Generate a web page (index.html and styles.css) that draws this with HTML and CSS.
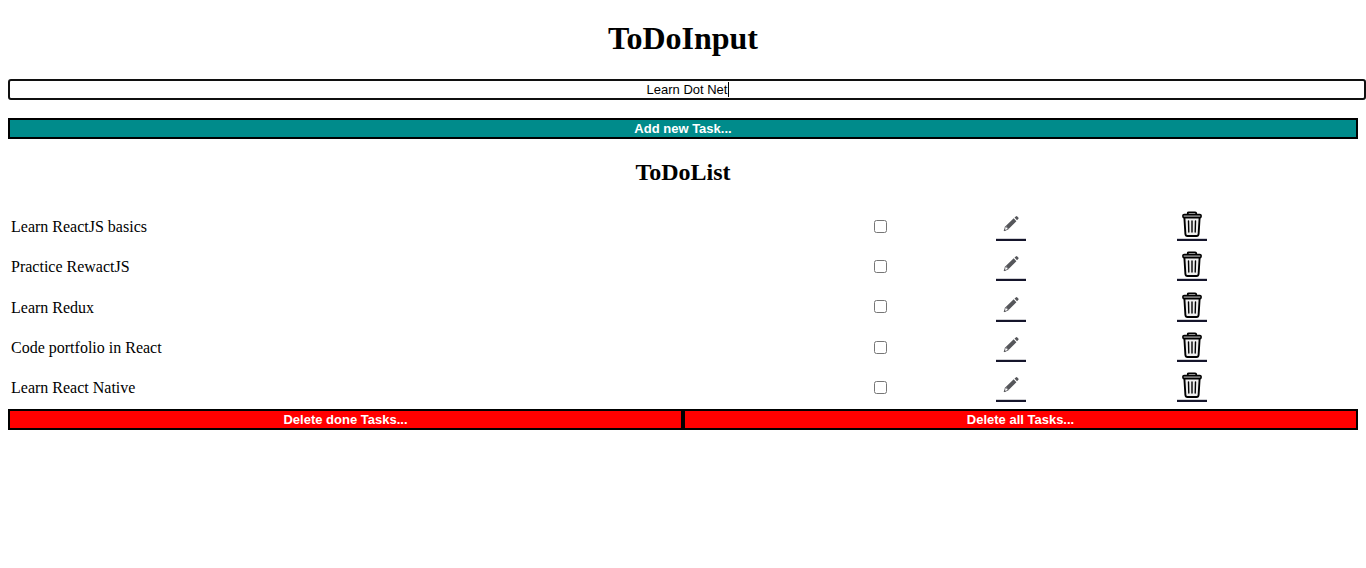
FILE: index.html
```html
<!DOCTYPE html>
<html lang="en">
<head>
<meta charset="utf-8">
<title>ToDo</title>
<link rel="stylesheet" href="styles.css">
</head>
<body>
<svg class="sprite" aria-hidden="true">
  <symbol id="pencil" viewBox="0 0 30 30">
    <path fill="#55565a" d="M18.500 6.500 19.800 5.400q.8-.6 1.500.1l1 1.100q.6.800-.1 1.500L21 9.300zM17.700 7.300l2.700 2.900-7.800 7.700-2.900-3z"/>
    <path fill="#fff" stroke="#55565a" stroke-width=".8" stroke-linejoin="round" d="M9.500 15.200 8.200 19.700l4.200-1.600z"/>
    <path fill="#55565a" d="m8.500 17.900-.7 2.200 2.200-.7z"/>
    <path fill="#15152b" d="M0 27.800h30v2.200H0z"/>
  </symbol>
  <symbol id="trash" viewBox="0 0 30 30">
    <path fill="none" stroke="#000" stroke-width="1.800" stroke-linejoin="round" d="M10.800 3.300V2.200q0-.9 1-.9h6.400q1 0 1 .9v1.100"/>
    <path fill="#eee" stroke="#000" stroke-width="1.900" stroke-linejoin="round" d="M7.400 7l1 16q.2 2 2 2h9.200q1.800 0 2-2l1-16"/>
    <rect x="5.900" y="3.400" width="18.200" height="3.400" rx="1.200" fill="#777" stroke="#000" stroke-width="1.500"/>
    <path fill="none" stroke="#000" stroke-width="1.400" stroke-linecap="round" d="m11.500 10 .3 11M15 10v11M18.500 10l-.3 11"/>
    <path fill="#15152b" d="M0 27.800h30v2.200H0z"/>
  </symbol>
</svg>
<main>
  <form class="entry">
    <h1 class="title">ToDoInput</h1>
    <div class="field">
      <input class="task-input" type="text" aria-label="New task" value="Learn Dot Net">
      <span class="caret"></span>
    </div>
    <button class="button add" type="button">Add new Task...</button>
  </form>
  <section class="list">
    <h2 class="subtitle">ToDoList</h2>
    <table class="tasks">
      <colgroup><col class="col-name"><col class="col-done"><col class="col-edit"><col class="col-delete"></colgroup>
      <tbody>
        <tr>
          <td class="name"><label for="t1">Learn ReactJS basics</label></td>
          <td class="cell"><input class="check" type="checkbox" id="t1"></td>
          <td class="cell"><button class="icon-button" type="button" aria-label="Edit"><svg class="icon"><use href="#pencil"/></svg></button></td>
          <td class="cell last"><button class="icon-button" type="button" aria-label="Delete"><svg class="icon"><use href="#trash"/></svg></button></td>
        </tr>
        <tr>
          <td class="name"><label for="t2">Practice RewactJS</label></td>
          <td class="cell"><input class="check" type="checkbox" id="t2"></td>
          <td class="cell"><button class="icon-button" type="button" aria-label="Edit"><svg class="icon"><use href="#pencil"/></svg></button></td>
          <td class="cell last"><button class="icon-button" type="button" aria-label="Delete"><svg class="icon"><use href="#trash"/></svg></button></td>
        </tr>
        <tr>
          <td class="name"><label for="t3">Learn Redux</label></td>
          <td class="cell"><input class="check" type="checkbox" id="t3"></td>
          <td class="cell"><button class="icon-button" type="button" aria-label="Edit"><svg class="icon"><use href="#pencil"/></svg></button></td>
          <td class="cell last"><button class="icon-button" type="button" aria-label="Delete"><svg class="icon"><use href="#trash"/></svg></button></td>
        </tr>
        <tr>
          <td class="name"><label for="t4">Code portfolio in React</label></td>
          <td class="cell"><input class="check" type="checkbox" id="t4"></td>
          <td class="cell"><button class="icon-button" type="button" aria-label="Edit"><svg class="icon"><use href="#pencil"/></svg></button></td>
          <td class="cell last"><button class="icon-button" type="button" aria-label="Delete"><svg class="icon"><use href="#trash"/></svg></button></td>
        </tr>
        <tr>
          <td class="name"><label for="t5">Learn React Native</label></td>
          <td class="cell"><input class="check" type="checkbox" id="t5"></td>
          <td class="cell"><button class="icon-button" type="button" aria-label="Edit"><svg class="icon"><use href="#pencil"/></svg></button></td>
          <td class="cell last"><button class="icon-button" type="button" aria-label="Delete"><svg class="icon"><use href="#trash"/></svg></button></td>
        </tr>
      </tbody>
    </table>
    <div class="actions">
      <button class="button delete" type="button">Delete done Tasks...</button>
      <button class="button delete" type="button">Delete all Tasks...</button>
    </div>
  </section>
</main>
</body>
</html>
```
FILE: styles.css
```css
body {
  margin: 8px 0 8px 8px;
  background: #fff;
  color: #000;
  font-family: "Liberation Serif", "Times New Roman", serif;
  font-size: 16px;
}

.sprite {
  display: none;
}

.title {
  margin: 12px 8px 22px 0;
  font-size: 32px;
  line-height: 37px;
  text-align: center;
}

.field {
  position: relative;
  margin-bottom: 18px;
}

.task-input {
  display: block;
  box-sizing: border-box;
  width: 100%;
  height: 21px;
  margin: 0;
  padding: 1px 2px;
  border: 2px solid #101010;
  border-radius: 3px;
  outline: none;
  background: #fff;
  color: #000;
  font-family: "Liberation Sans", Arial, sans-serif;
  font-size: 13px;
  text-align: center;
}

.caret {
  position: absolute;
  top: 3px;
  left: calc(50% + 41px);
  width: 1px;
  height: 15px;
  background: #000;
}

.button {
  box-sizing: border-box;
  height: 21px;
  padding: 0 6px;
  border: 2px solid #000;
  color: #fff;
  font-family: "Liberation Sans", Arial, sans-serif;
  font-size: 13px;
  font-weight: bold;
  line-height: 17px;
}

.add {
  display: block;
  width: calc(100% - 8px);
  background: #008b8b;
}

.list {
  margin-right: 8px;
}

.subtitle {
  margin: 20px 0;
  font-size: 24px;
  line-height: 27px;
  text-align: center;
}

.tasks {
  width: 100%;
  margin-bottom: 2px;
  table-layout: fixed;
  border-collapse: collapse;
}

.tasks tr {
  height: 40px;
}

.tasks tr:nth-child(3n) {
  height: 41px;
}

.name {
  padding: 2px 3px 0;
}

.cell {
  padding: 0;
  text-align: center;
}

.last {
  padding-right: 4%;
}

.col-name {
  width: 60%;
}

.col-done {
  width: 9.2%;
}

.col-edit {
  width: 10.2%;
}

.col-delete {
  width: 20.6%;
}

.check {
  display: block;
  width: 13px;
  height: 13px;
  margin: 0 auto;
}

.icon-button {
  display: inline-block;
  padding: 0;
  border: 0;
  background: none;
  vertical-align: middle;
}

.icon {
  display: block;
  width: 30px;
  height: 30px;
}

.actions {
  display: flex;
}

.delete {
  flex: 1;
  background: #f00;
}
```
